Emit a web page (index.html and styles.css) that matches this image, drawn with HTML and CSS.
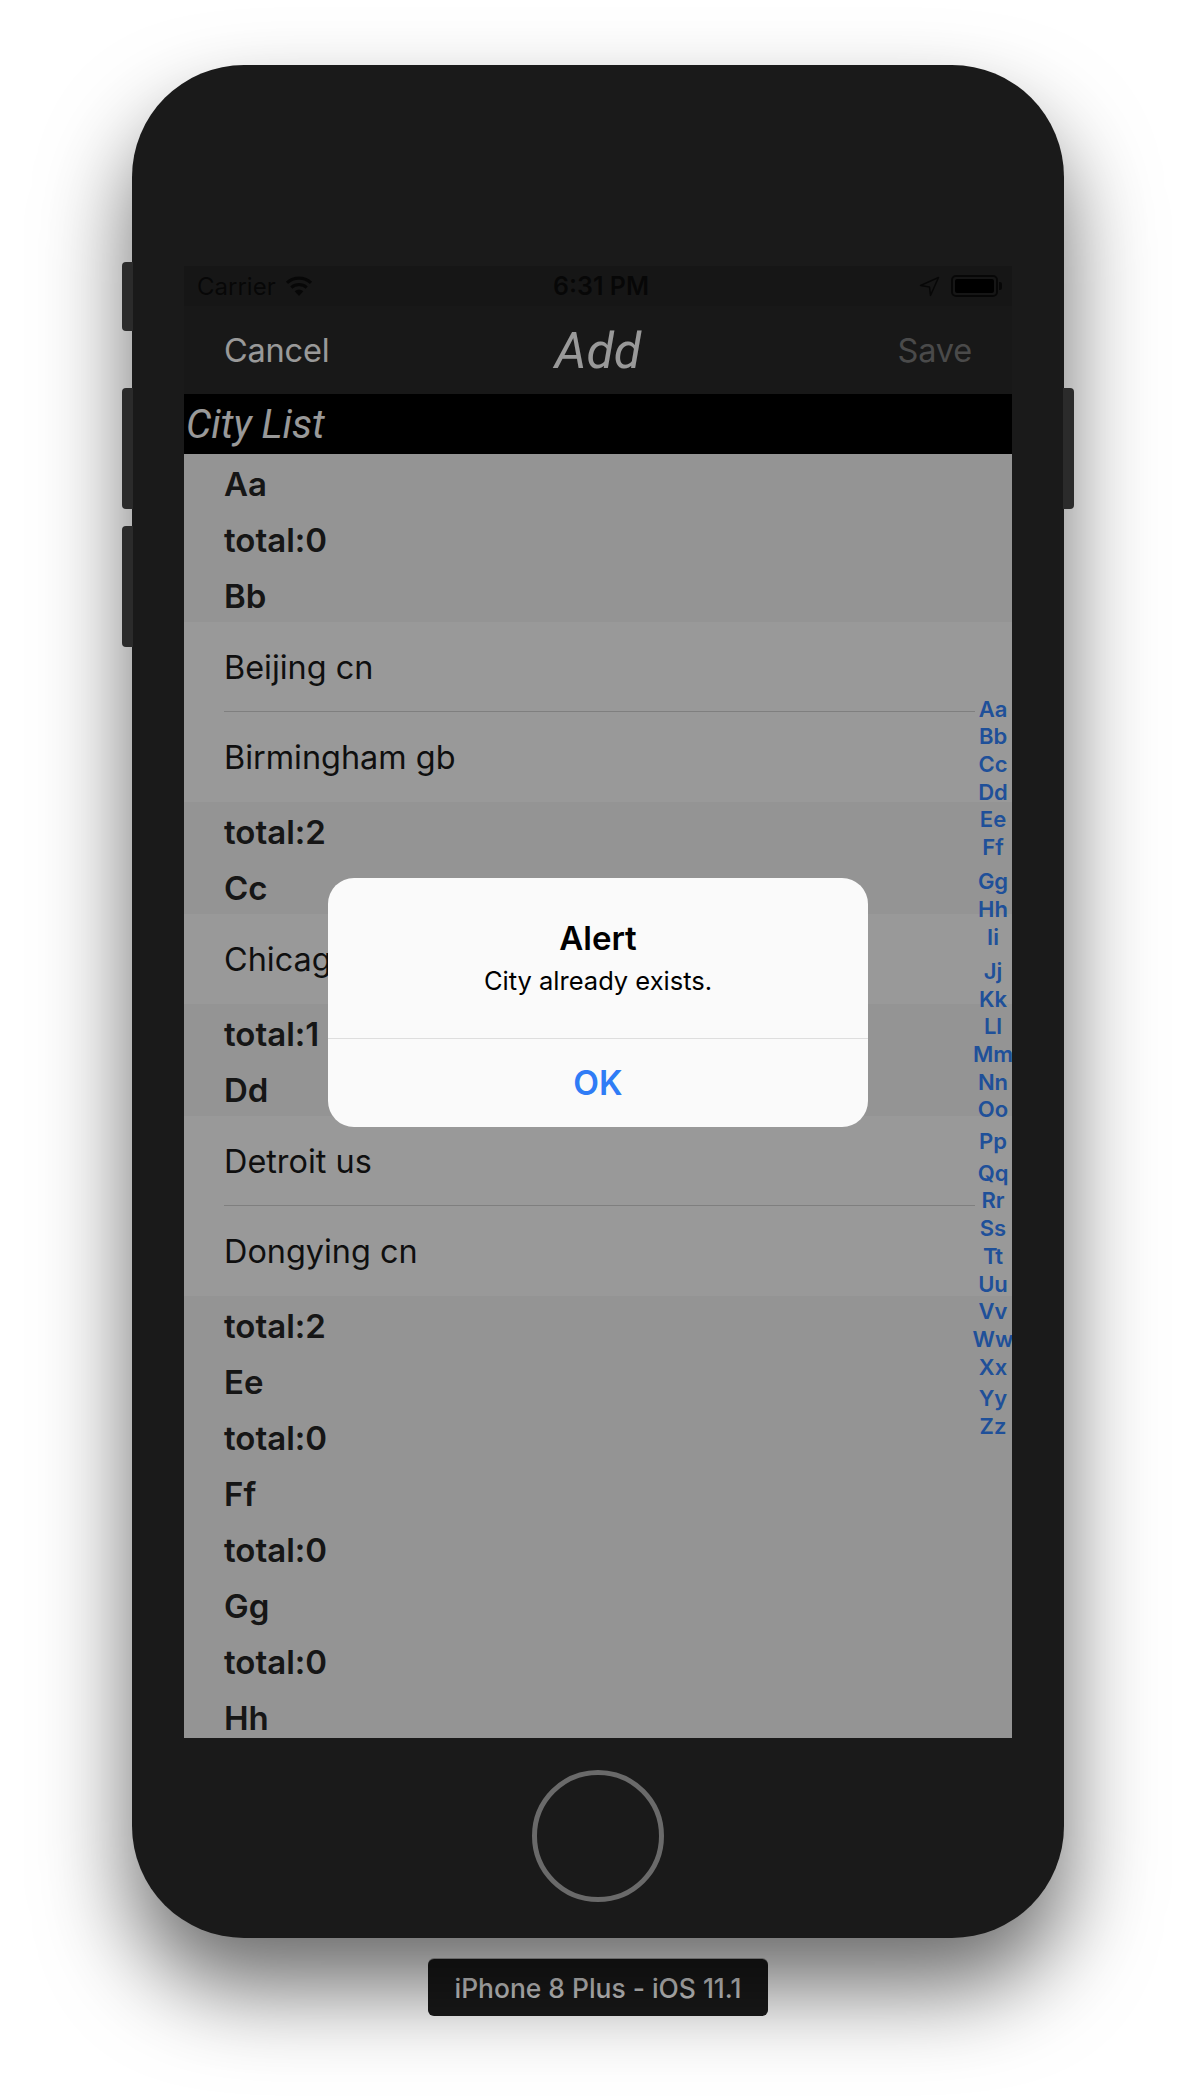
FILE: index.html
```html
<!DOCTYPE html>
<html lang="en">
<head>
    <meta charset="UTF-8">
    <title>iPhone 8 Plus - iOS 11.1</title>
    <link rel="stylesheet" href="styles.css">
</head>
<body>
    <div class="device">
        <span class="hw-btn hw-mute"></span>
        <span class="hw-btn hw-vol-up"></span>
        <span class="hw-btn hw-vol-down"></span>
        <span class="hw-btn hw-power"></span>

        <div class="screen">
            <div class="status-bar">
                <div class="status-left">
                    <span>Carrier</span>
                    <svg class="wifi" width="28" height="20" viewBox="0 0 28 20">
                        <path d="M14 20 L9.6 15.2 A6.6 6.6 0 0 1 18.4 15.2 Z" />
                        <path d="M7.4 12.8 A10 10 0 0 1 20.6 12.8 L22.8 10.4 A13.4 13.4 0 0 0 5.2 10.4 Z" />
                        <path d="M3.1 8.1 A16 16 0 0 1 24.9 8.1 L27.1 5.7 A19.4 19.4 0 0 0 .9 5.7 Z" />
                    </svg>
                </div>
                <div class="status-time">6:31 PM</div>
                <div class="status-right">
                    <svg class="arrow" width="21" height="21" viewBox="0 0 21 21">
                        <path d="M19.5 1.5 L1.5 9.5 L10.5 11 L11.5 19.5 Z" />
                    </svg>
                    <div class="battery"><span class="battery-fill"></span></div>
                    <span class="battery-nub"></span>
                </div>
            </div>

            <div class="nav-bar">
                <span class="nav-btn">Cancel</span>
                <span class="nav-title">Add</span>
                <span class="nav-btn nav-disabled">Save</span>
            </div>

            <div class="list-title">City List</div>

            <div class="list">
                <div class="section">Aa</div>
                <div class="section">total:0</div>
                <div class="section">Bb</div>
                <div class="group">
                    <div class="cell">Beijing cn</div>
                    <div class="cell">Birmingham gb</div>
                </div>
                <div class="section">total:2</div>
                <div class="section">Cc</div>
                <div class="group">
                    <div class="cell">Chicago us</div>
                </div>
                <div class="section">total:1</div>
                <div class="section">Dd</div>
                <div class="group">
                    <div class="cell">Detroit us</div>
                    <div class="cell">Dongying cn</div>
                </div>
                <div class="section">total:2</div>
                <div class="section">Ee</div>
                <div class="section">total:0</div>
                <div class="section">Ff</div>
                <div class="section">total:0</div>
                <div class="section">Gg</div>
                <div class="section">total:0</div>
                <div class="section">Hh</div>
            </div>

            <div class="index">
                <span>Aa</span><span>Bb</span><span>Cc</span><span>Dd</span><span>Ee</span><span>Ff</span>
                <span class="taller">Gg</span><span>Hh</span><span>Ii</span>
                <span class="taller">Jj</span><span>Kk</span><span>Ll</span><span>Mm</span><span>Nn</span><span>Oo</span>
                <span class="tall">Pp</span><span class="tall">Qq</span><span>Rr</span><span>Ss</span><span>Tt</span><span>Uu</span><span>Vv</span><span>Ww</span><span>Xx</span>
                <span class="tall">Yy</span><span>Zz</span>
            </div>

            <div class="dim"></div>

            <div class="alert">
                <div class="alert-body">
                    <div class="alert-title">Alert</div>
                    <div class="alert-msg">City already exists.</div>
                </div>
                <div class="alert-btn">OK</div>
            </div>
        </div>

        <div class="home-btn"></div>
    </div>

    <div class="device-label">iPhone 8 Plus - iOS 11.1</div>
</body>
</html>
```

FILE: styles.css
```css
:root {
    --body-color: #262626;
    --font-ui: Inter, "Noto Sans", sans-serif;
}

html, body {
    margin: 0;
    background: #fff;
}

body {
    height: 2100px;
    overflow: hidden;
    display: flex;
    flex-direction: column;
    align-items: center;
    padding-top: 65px;
    box-sizing: border-box;
    font-family: var(--font-ui);
}

.device {
    position: relative;
    width: 932px;
    height: 1873px;
    box-sizing: border-box;
    padding: 201px 52px 0;
    background: #1a1a1a;
    border-radius: 112px;
    box-shadow: 0 50px 90px rgba(0, 0, 0, 0.58);
}

.hw-btn {
    position: absolute;
    width: 11px;
    background: #2b2b2b;
    border-radius: 4px 0 0 4px;
}

.hw-mute { left: -10px; top: 197px; height: 69px; }
.hw-vol-up { left: -10px; top: 323px; height: 121px; }
.hw-vol-down { left: -10px; top: 461px; height: 121px; }
.hw-power { right: -10px; top: 323px; height: 121px; border-radius: 0 4px 4px 0; }

.screen {
    position: relative;
    height: 1472px;
    overflow: hidden;
    background: #fff;
}

.dim {
    position: absolute;
    inset: 0;
    background: rgba(0, 0, 0, 0.4);
}

/* status bar */
.status-bar {
    height: 40px;
    background: #262626;
    color: #0d0d0d;
    font-size: 24px;
    display: grid;
    grid-template-columns: 1fr auto 1fr;
    align-items: center;
    padding: 0 10px 0 13px;
}

.status-left {
    display: flex;
    align-items: center;
    gap: 9px;
}

.wifi path { fill: #0d0d0d; }

.status-time {
    font-size: 25px;
    font-weight: 600;
    padding-left: 3px;
}

.status-right {
    display: flex;
    align-items: center;
    justify-content: flex-end;
}

.arrow {
    margin-right: 11px;
}

.arrow path {
    fill: none;
    stroke: #0d0d0d;
    stroke-width: 1.6;
    stroke-linejoin: round;
}

.battery {
    width: 47px;
    height: 22px;
    box-sizing: border-box;
    border: 2px solid #0d0d0d;
    border-radius: 5px;
    padding: 2px;
}

.battery-fill {
    display: block;
    height: 100%;
    background: #000;
    border-radius: 2px;
}

.battery-nub {
    width: 3px;
    height: 8px;
    margin-left: 1px;
    background: #0d0d0d;
    border-radius: 0 2px 2px 0;
}

/* nav */
.nav-bar {
    height: 88px;
    background: #282828;
    color: #fff;
    display: grid;
    grid-template-columns: 1fr auto 1fr;
    align-items: center;
    padding: 0 40px;
}

.nav-btn {
    font-size: 32.5px;
    letter-spacing: -0.2px;
}

.nav-disabled {
    color: #7c7c7c;
    justify-self: end;
}

.nav-title {
    font-family: Roboto, sans-serif;
    font-weight: 400;
    font-style: italic;
    font-size: 50px;
    padding-top: 2px;
}

.list-title {
    height: 60px;
    line-height: 62px;
    background: #000;
    color: #fff;
    font-family: Roboto, sans-serif;
    font-weight: 400;
    font-style: italic;
    font-size: 40px;
    padding-left: 2px;
}

/* table */
.list {
    background: #fff;
    color: var(--body-color);
}

.section {
    height: 56px;
    box-sizing: border-box;
    line-height: 56px;
    padding: 1.5px 0 0 40px;
    background: #f7f7f7;
    font-size: 33px;
    font-weight: 600;
}

.group {
    background: #fff;
    color: #1a1a1a;
}

.cell {
    height: 90px;
    line-height: 92px;
    margin-left: 40px;
    margin-right: 37px;
    font-size: 32.4px;
    box-sizing: border-box;
}

.cell + .cell {
    border-top: 1px solid #d4d4d4;
    line-height: 91px;
    margin-top: -1px;
    height: 91px;
}

.index {
    position: absolute;
    right: 0;
    top: 429.5px;
    width: 38px;
    display: flex;
    flex-direction: column;
    align-items: center;
    color: #3585ff;
    font-size: 22px;
    font-weight: 600;
    line-height: 27.7px;
    white-space: nowrap;
}

.index .tall {
    margin-top: 4px;
}

.index .taller {
    margin-top: 6.5px;
}

/* alert */
.alert {
    position: absolute;
    left: 144px;
    top: 612px;
    width: 540px;
    height: 249px;
    background: #fafafa;
    border-radius: 26px;
    overflow: hidden;
    display: flex;
    flex-direction: column;
    text-align: center;
    color: #000;
}

.alert-body {
    height: 161px;
    box-sizing: border-box;
    padding-top: 40px;
    border-bottom: 1px solid #dedede;
}

.alert-title {
    font-size: 33px;
    line-height: 40px;
    font-weight: 600;
}

.alert-msg {
    font-size: 25.5px;
    line-height: 36px;
    margin-top: 5px;
}

.alert-btn {
    flex: 1;
    display: flex;
    align-items: center;
    justify-content: center;
    color: #2f7cf6;
    font-size: 33.5px;
    font-weight: 600;
}

/* below the screen */
.home-btn {
    width: 122px;
    height: 122px;
    margin: 32px auto 0;
    border: 5px solid #6a6a6a;
    border-radius: 50%;
}

.device-label {
    margin-top: 21px;
    width: 340px;
    height: 57px;
    line-height: 59px;
    text-align: center;
    background: #1a1a1a;
    border-radius: 6px;
    color: #d6d6d6;
    font-size: 26.4px;
    font-weight: 500;
    box-shadow: 0 -1px 0 #b5b5b5;
}
```
